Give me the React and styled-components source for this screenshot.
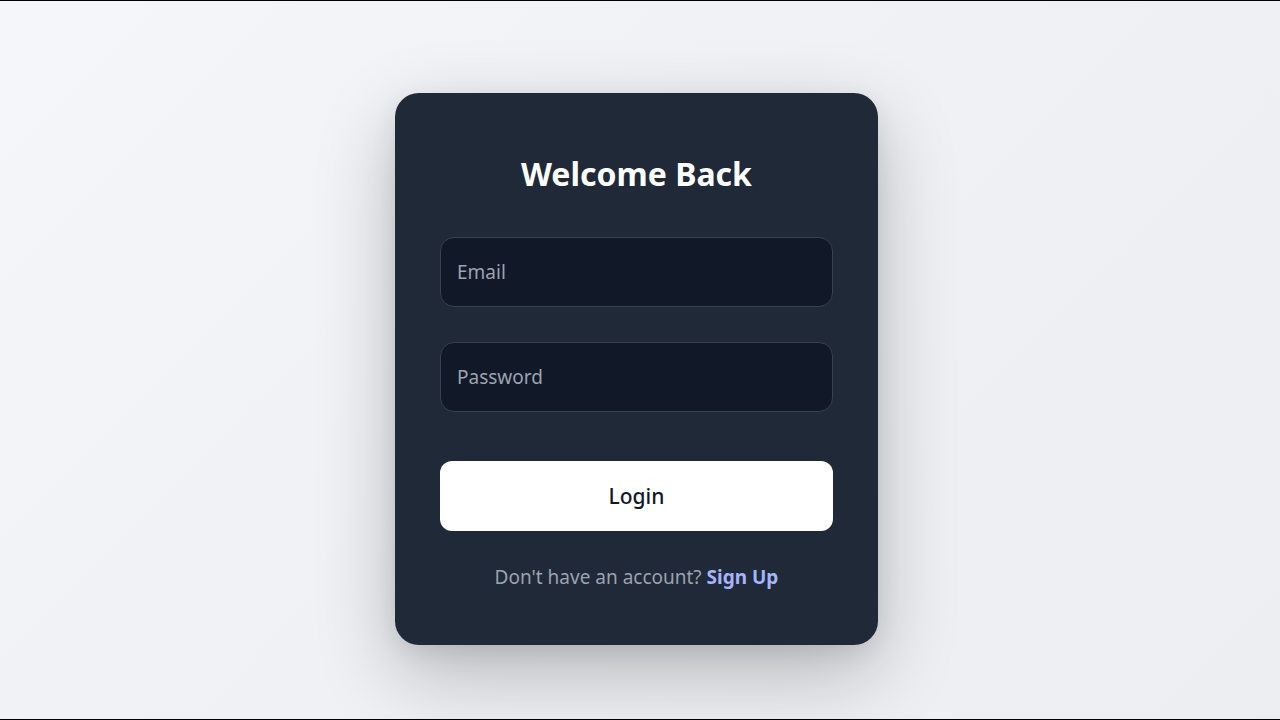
import React from 'react';
import styled, {createGlobalStyle} from 'styled-components';

const GlobalStyle = createGlobalStyle`
    html, body {
        margin: 0;
        padding: 0;
    }
    body {
        font-family: "Noto Sans", "Open Sans", sans-serif;
    }
    * {
        box-sizing: border-box;
    }
`

const App = () => {
    return (
        <Page>
            <GlobalStyle />
            <Card>
                <Title>Welcome Back</Title>
                <Form onSubmit={e => e.preventDefault()}>
                    <Field type="email" placeholder="Email" />
                    <Field type="password" placeholder="Password" />
                    <Button type="submit">Login</Button>
                </Form>
                <Footer>
                    Don't have an account? <SignUp href="#">Sign Up</SignUp>
                </Footer>
            </Card>
        </Page>
    )
}

export default App;

// Styles
const Page = styled.div`
    height: 720px;
    border-top: 1px solid #000;
    border-bottom: 1px solid #000;
    background: linear-gradient(135deg, #f5f6f9 0%, #eef0f3 60%, #eceef1 100%);
    padding: 92px 7px 0 0;
    overflow: hidden;
`

const Card = styled.div`
    width: 483px;
    height: 552px;
    margin: 0 auto;
    background: #1f2937;
    border-radius: 24px;
    padding: 59px 45px 0;
    box-shadow: 0 28px 80px rgba(0, 0, 0, 0.24), 0 8px 24px rgba(0, 0, 0, 0.08);
    display: flex;
    flex-direction: column;
`

const Title = styled.h1`
    margin: 0 0 41px;
    font-size: 32px;
    line-height: 44px;
    font-weight: 700;
    color: #fff;
    text-align: center;
`

const Form = styled.form`
    display: flex;
    flex-direction: column;
`

const Field = styled.input`
    height: 70px;
    width: 100%;
    margin-bottom: 35px;
    padding: 0 16px;
    background: #111827;
    border: 1px solid #374151;
    border-radius: 14px;
    font-family: inherit;
    font-size: 19px;
    color: #e5e7eb;
    outline: none;

    &::placeholder {
        color: #9ca3af;
    }

    &:nth-of-type(2) {
        margin-bottom: 49px;
    }
`

const Button = styled.button`
    height: 70px;
    width: 100%;
    border: none;
    border-radius: 12px;
    background: #fff;
    color: #111827;
    font-family: inherit;
    font-size: 21px;
    font-weight: 500;
    cursor: pointer;
`

const Footer = styled.p`
    margin: 33px 0 0;
    text-align: center;
    font-size: 19px;
    line-height: 26px;
    color: #9ca3af;
`

const SignUp = styled.a`
    color: #a5b4fc;
    font-weight: 700;
    text-decoration: none;
`
